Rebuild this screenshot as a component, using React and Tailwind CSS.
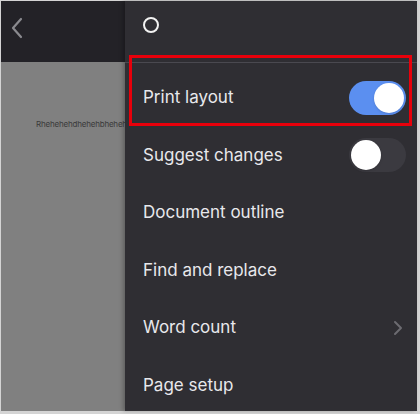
const ROWS = [
  { label: 'Print layout', toggle: true, on: true },
  { label: 'Suggest changes', toggle: true, on: false },
  { label: 'Document outline' },
  { label: 'Find and replace' },
  { label: 'Word count', chevron: true },
  { label: 'Page setup' },
];

function Toggle({ on }) {
  return (
    <div
      className={`w-[57px] h-[34px] rounded-full flex items-center px-[2px] ${
        on ? 'bg-[#5b8ff0] justify-end' : 'bg-[#3b3a40] justify-start'
      }`}
    >
      <div className="w-[30px] h-[30px] rounded-full bg-white shadow" />
    </div>
  );
}

export default function App() {
  return (
    <div
      className="relative w-[420px] h-[414px] overflow-hidden bg-[#d4d4d4] pl-[1px] pt-[1px] pr-[3px] pb-[3px]"
      style={{ fontFamily: 'Inter, "Noto Sans", sans-serif' }}
    >
      <div className="flex w-full h-full">
        {/* document side */}
        <div className="w-[124px] flex flex-col">
          <div className="h-[61px] shrink-0 bg-[#232227] flex items-start pl-[9px] pt-[16px]">
            <svg width="14" height="22" viewBox="0 0 14 22" fill="none">
              <path d="M11 2L3 11l8 9" stroke="#8a8a8f" strokeWidth="2.2" strokeLinecap="round" strokeLinejoin="round" />
            </svg>
          </div>
          <div className="flex-1 bg-[#808080] pt-[47px] pl-[35px] overflow-hidden whitespace-nowrap">
            <span className="text-[8px] leading-[10px] text-[#3a3a3a] tracking-[-0.2px]">Rhehehehdhehehbhehehe</span>
          </div>
        </div>

        {/* menu panel */}
        <div className="flex-1 bg-[#2f2e33] flex flex-col overflow-hidden shadow-[-2px_0_4px_rgba(0,0,0,0.25)]">
          <div className="h-[62px] shrink-0 border-b border-[#4a4950] flex items-start pl-[18px] pt-[16px]">
            <div className="w-[16px] h-[16px] rounded-full border-2 border-[#f2f2f2]" />
          </div>
          <div className="pt-[6px] shrink-0">
            {ROWS.map(r => (
              <div key={r.label} className="h-[57.6px] flex items-center justify-between pl-[18px] pr-[11px]">
                <span className="text-[17px] text-[#e8e8ec]">{r.label}</span>
                {r.toggle && <Toggle on={r.on} />}
                {r.chevron && (
                  <svg width="10" height="16" viewBox="0 0 10 16" fill="none" className="mr-[3px]">
                    <path d="M2 2l6 6-6 6" stroke="#6c6b71" strokeWidth="2" strokeLinecap="round" strokeLinejoin="round" />
                  </svg>
                )}
              </div>
            ))}
          </div>
        </div>
      </div>

      {/* annotation box */}
      <div className="absolute left-[129px] top-[55px] w-[283px] h-[71px] border-[3px] border-[#e8000b]" />
    </div>
  );
}
